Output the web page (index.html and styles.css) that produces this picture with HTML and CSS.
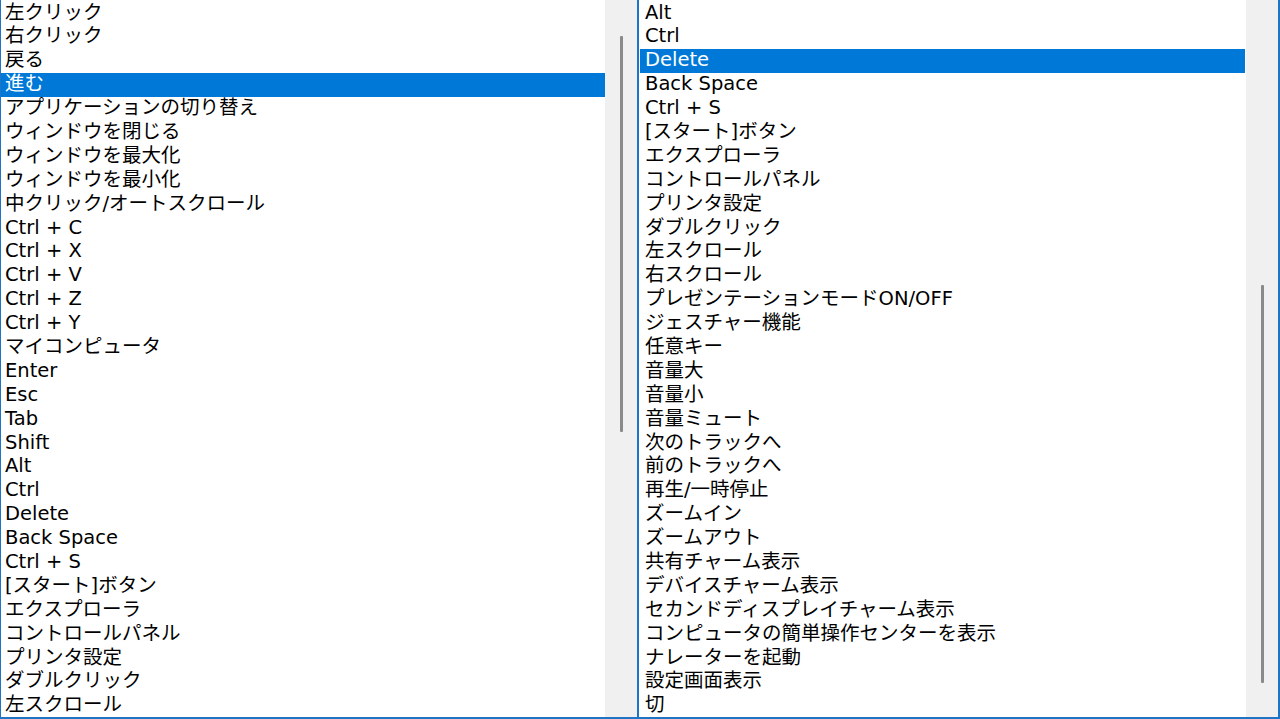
FILE: index.html
```html
<!DOCTYPE html>
<html lang="ja">
<head>
<meta charset="utf-8">
<title>ボタン割り当て</title>
<link rel="stylesheet" href="styles.css">
</head>
<body>
<div class="panes">
  <div class="listbox listbox-left">
    <ul class="items items-left">
      <li>左クリック</li>
      <li>右クリック</li>
      <li>戻る</li>
      <li class="selected">進む</li>
      <li>アプリケーションの切り替え</li>
      <li>ウィンドウを閉じる</li>
      <li>ウィンドウを最大化</li>
      <li>ウィンドウを最小化</li>
      <li>中クリック/オートスクロール</li>
      <li>Ctrl + C</li>
      <li>Ctrl + X</li>
      <li>Ctrl + V</li>
      <li>Ctrl + Z</li>
      <li>Ctrl + Y</li>
      <li>マイコンピュータ</li>
      <li>Enter</li>
      <li>Esc</li>
      <li>Tab</li>
      <li>Shift</li>
      <li>Alt</li>
      <li>Ctrl</li>
      <li>Delete</li>
      <li>Back Space</li>
      <li>Ctrl + S</li>
      <li>[スタート]ボタン</li>
      <li>エクスプローラ</li>
      <li>コントロールパネル</li>
      <li>プリンタ設定</li>
      <li>ダブルクリック</li>
      <li>左スクロール</li>
    </ul>
    <div class="scrollbar"><div class="thumb thumb-left"></div></div>
  </div>
  <div class="listbox listbox-right">
    <ul class="items items-right">
      <li>Alt</li>
      <li>Ctrl</li>
      <li class="selected">Delete</li>
      <li>Back Space</li>
      <li>Ctrl + S</li>
      <li>[スタート]ボタン</li>
      <li>エクスプローラ</li>
      <li>コントロールパネル</li>
      <li>プリンタ設定</li>
      <li>ダブルクリック</li>
      <li>左スクロール</li>
      <li>右スクロール</li>
      <li>プレゼンテーションモードON/OFF</li>
      <li>ジェスチャー機能</li>
      <li>任意キー</li>
      <li>音量大</li>
      <li>音量小</li>
      <li>音量ミュート</li>
      <li>次のトラックへ</li>
      <li>前のトラックへ</li>
      <li>再生/一時停止</li>
      <li>ズームイン</li>
      <li>ズームアウト</li>
      <li>共有チャーム表示</li>
      <li>デバイスチャーム表示</li>
      <li>セカンドディスプレイチャーム表示</li>
      <li>コンピュータの簡単操作センターを表示</li>
      <li>ナレーターを起動</li>
      <li>設定画面表示</li>
      <li>切</li>
    </ul>
    <div class="scrollbar"><div class="thumb thumb-right"></div></div>
  </div>
</div>
</body>
</html>
```
FILE: styles.css
```css
html, body {
  margin: 0;
  padding: 0;
  background: #ffffff;
}

body {
  width: 1280px;
  height: 719px;
  overflow: hidden;
  font-family: "DejaVu Sans", "Noto Sans CJK JP", sans-serif;
  font-size: 19.5px;
  color: #000000;
}

.panes {
  display: flex;
  height: 719px;
}

.listbox {
  box-sizing: border-box;
  height: 719px;
  display: flex;
  background: #ffffff;
  border-bottom: 2px solid #1f74c6;
  overflow: hidden;
}

.listbox-left {
  width: 637px;
  border-left: 1px solid #1f74c6;
}

.listbox-right {
  width: 643px;
  border-left: 2px solid #1f74c6;
  border-right: 2px solid #1f74c6;
}

.items {
  list-style: none;
  margin: 0;
  padding: 1px 0 0 0;
  flex: 1;
  min-width: 0;
  overflow: hidden;
}

.items li {
  box-sizing: border-box;
  height: 23.9px;
  padding-top: 1.5px;
  line-height: 20px;
  white-space: nowrap;
}

.items-left li {
  padding-left: 4px;
}

.items-right {
  padding-left: 1px;
  padding-right: 1px;
}

.items-right li {
  padding-left: 5px;
}

.items li.selected {
  background: #0078d7;
  color: #ffffff;
}

.scrollbar {
  width: 32px;
  flex: none;
  background: #f0f0f0;
  display: flex;
  flex-direction: column;
}

.thumb {
  width: 3px;
  margin-left: 15px;
  background: #8a8a8a;
  border-radius: 1px;
}

.thumb-left {
  margin-top: 36px;
  height: 396px;
}

.thumb-right {
  margin-top: 285px;
  height: 398px;
}
```
